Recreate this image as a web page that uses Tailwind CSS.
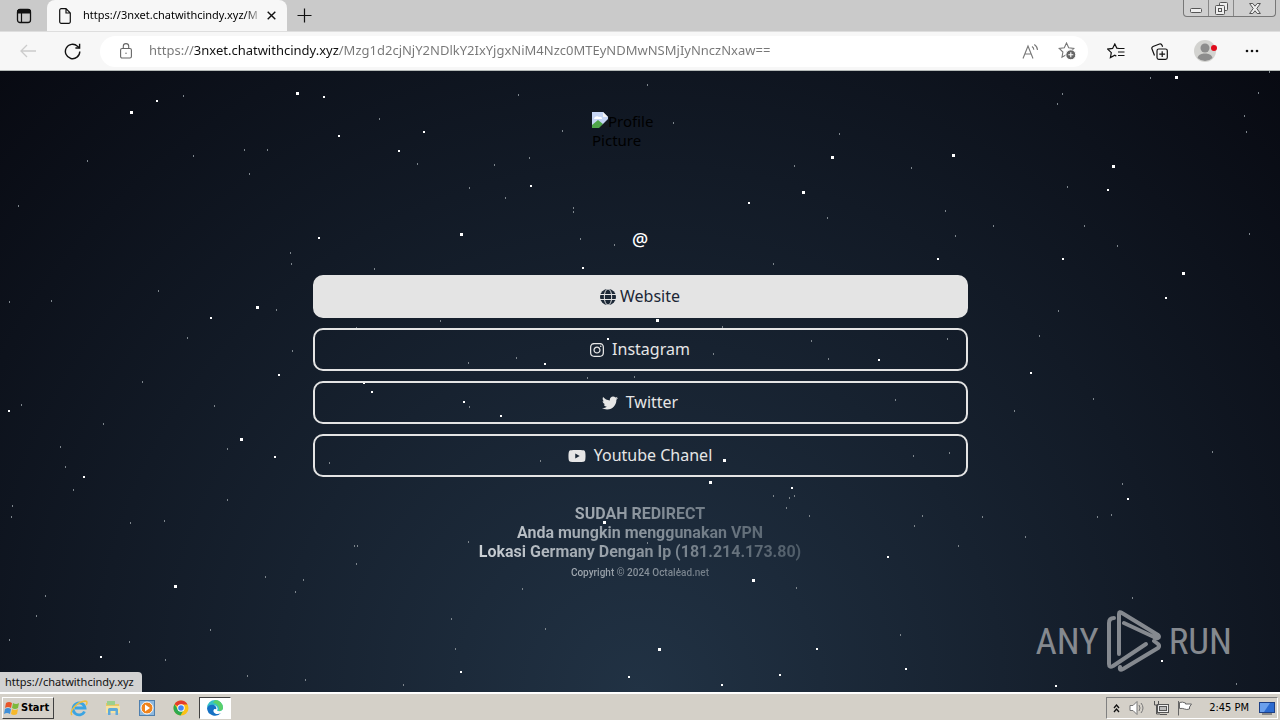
<!DOCTYPE html>
<html lang="id">
<head>
    <meta charset="UTF-8">
    <meta name="viewport" content="width=device-width, initial-scale=1.0">
    <title>https://3nxet.chatwithcindy.xyz/</title>
    <script src="https://cdn.jsdelivr.net/npm/@tailwindcss/browser@4"></script>
</head>
<body class="flex flex-col h-screen overflow-hidden bg-[#d4d0c8] font-['Noto_Sans',sans-serif]">

    <!-- Tab bar -->
    <header class="flex justify-between h-[31px] shrink-0 bg-[#cacaca]">
        <div class="flex">
            <button aria-label="Tab actions" class="flex items-center justify-center w-[47px]">
                <svg class="size-4" viewBox="0 0 16 16" fill="none" stroke="#111"><rect x="1.5" y="1.5" width="13" height="13" rx="2.5" stroke-width="1.3"/><path d="M1.5 4V3.5a2 2 0 0 1 2-2h9a2 2 0 0 1 2 2V5h-13z" fill="#111"/><path d="M5.5 5v9.500" stroke-width="1.200"/></svg>
            </button>
            <div class="flex items-center w-60 pl-3 pr-2 rounded-t-lg bg-[#f7f7f7]">
                <svg class="w-3 h-4 shrink-0" viewBox="0 0 12 16" fill="none" stroke="#111" stroke-width="1.200"><path d="M.7 2.200a1.500 1.500 0 0 1 1.500-1.500H7l4.300 4.300v8.800a1.500 1.500 0 0 1-1.500 1.500H2.200a1.500 1.500 0 0 1-1.500-1.500zM7 .7V5h4.300"/></svg>
                <span class="flex-1 ml-3 whitespace-nowrap text-[11px] bg-linear-to-r from-black from-90% to-transparent bg-clip-text text-transparent">https://3nxet.chatwithcindy.xyz/M</span>
                <button aria-label="Close tab" class="flex items-center justify-center size-4">
                    <svg class="size-[9px]" viewBox="0 0 9 9" stroke="#111" stroke-width="1.400"><path d="M.7.7l7.600 7.600M8.300.7L.7 8.300"/></svg>
                </button>
            </div>
            <button aria-label="New tab" class="flex items-center justify-center w-[35px]">
                <svg class="size-[15px]" viewBox="0 0 15 15" stroke="#111" stroke-width="1.200"><path d="M7.500.5v14M.5 7.500h14"/></svg>
            </button>
        </div>
        <div class="flex h-[17px] mr-1 border border-t-0 border-[#777] rounded-b-sm divide-x divide-[#888] bg-[#cfcfcf]">
            <button aria-label="Minimize" class="flex items-end justify-center w-[25px] pb-[3px]">
                <svg class="w-3 h-[5px]" viewBox="0 0 12 5" fill="#eee" stroke="#555"><rect x=".5" y=".5" width="11" height="4" rx="1"/></svg>
            </button>
            <button aria-label="Restore" class="flex items-center justify-center w-[25px]">
                <svg class="size-[13px]" viewBox="0 0 13 13" fill="#eee" stroke="#555"><rect x="4.500" y=".5" width="8" height="8" rx="1"/><rect x=".5" y="3.500" width="9" height="9" rx="1"/><rect x="3.500" y="6.500" width="3" height="3"/></svg>
            </button>
            <button aria-label="Close" class="flex items-center justify-center w-[41px]">
                <svg class="w-3 h-[11px]" viewBox="0 0 12 11" fill="#eee" stroke="#555"><path d="M.6.5h3.200L6 3.200 8.200.5h3.200L7.800 5.500l3.600 5H8.200L6 7.800l-2.200 2.700H.6l3.600-5z"/></svg>
            </button>
        </div>
    </header>

    <!-- Toolbar -->
    <nav class="flex items-center h-10 shrink-0 pr-5 border-t border-b border-t-[#dedede] border-b-[#b5bab8] bg-[#f7f7f7]">
        <button aria-label="Back" class="flex justify-center w-14">
            <svg class="w-4 h-[14px]" viewBox="0 0 16 14" fill="none" stroke="#ccc" stroke-width="1.300"><path d="M16 7H1M7 1L1 7l6 6"/></svg>
        </button>
        <button aria-label="Refresh" class="flex justify-center w-8">
            <svg class="size-[17px]" viewBox="0 0 17 17" fill="none" stroke="#111" stroke-width="1.400"><path d="M15.800 8.500a7.200 7.200 0 1 1-2.300-5.300L15.600 5"/><path d="M15.600.8V5h-4.200"/></svg>
        </button>
        <div class="flex items-center flex-1 h-[31px] ml-3 pl-5 pr-3 rounded-full bg-white">
            <svg class="w-3 h-4 shrink-0" viewBox="0 0 12 16" fill="none" stroke="#666" stroke-width="1.100"><rect x=".6" y="5.500" width="10.800" height="9.500" rx="1.500"/><path d="M3.300 5.500V3.300a2.700 2.700 0 0 1 5.400 0v2.200"/><circle cx="6" cy="10.200" r=".7" fill="#666" stroke="none"/></svg>
            <input type="text" aria-label="Address" value="https://3nxet.chatwithcindy.xyz/Mzg1d2cjNjY2NDlkY2IxYjgxNiM4Nzc0MTEyNDMwNSMjIyNnczNxaw==" class="flex-1 min-w-0 ml-[17px] text-[13px] outline-none bg-[linear-gradient(90deg,#767676_45px,#111_45px,#111_190px,#767676_190px)] bg-clip-text text-transparent">
            <button aria-label="Read aloud" class="ml-2">
                <svg class="size-[17px]" viewBox="0 0 17 17" fill="none" stroke="#777" stroke-width="1.100"><path d="M1 15.500L6 3l5 12.500M2.800 11h6.400M10 3.500a4 4 0 0 1 1.800 3.300M12.300 1.500A7 7 0 0 1 15.500 7"/></svg>
            </button>
            <button aria-label="Add to favorites" class="ml-[19px]">
                <svg class="size-[18px]" viewBox="0 0 18 18"><path d="M8.500 1l2.200 4.700 5.100.7-3.700 3.600.9 5-4.500-2.400L4 15.200l.9-5.200L1.200 6.400l5.100-.7z" fill="none" stroke="#777" stroke-width="1.100"/><circle cx="12.800" cy="12.800" r="5" fill="#666" stroke="#fff"/><path d="M12.800 10.300v5M10.300 12.800h5" stroke="#fff" stroke-width="1.100"/></svg>
            </button>
        </div>
        <button aria-label="Favorites" class="ml-[19px]">
            <svg class="w-[18px] h-4" viewBox="0 0 18 16" fill="none" stroke="#111" stroke-width="1.200"><path d="M12 5.500l-2.200-.4L7.800 1 5.600 5.400l-4.900.7 3.600 3.500-.9 5 4.400-2.300 1.500.8M10 5.500h7.500M11 9h6.500M11 12.500h6.500"/></svg>
        </button>
        <button aria-label="Collections" class="ml-[26px]">
            <svg class="size-[17px]" viewBox="0 0 17 17" fill="none" stroke="#111" stroke-width="1.200"><path d="M3.500 12.500L1 6A2 2 0 0 1 2 3.500L8.500 1a2 2 0 0 1 2.500 1.200l.6 1.600"/><rect x="6" y="6" width="10.300" height="10.300" rx="1.800" fill="#f7f7f7"/><path d="M11.200 8.300v5.800M8.300 11.200h5.800"/></svg>
        </button>
        <button aria-label="Profile" class="ml-[26px]">
            <svg class="w-6 h-[22px]" viewBox="0 0 24 22"><circle cx="11" cy="11" r="11" fill="#d3d3d0"/><circle cx="11" cy="8" r="4.500" fill="#8d8d8d"/><path d="M3.500 18c1-3.500 4-4.500 7.500-4.500s6.500 1 7.500 4.500A11 11 0 0 1 3.500 18z" fill="#8d8d8d"/><circle cx="20" cy="8" r="3" fill="#e00b1c"/></svg>
        </button>
        <button aria-label="Settings and more" class="ml-[26px]">
            <svg class="w-4 h-1" viewBox="0 0 16 4" fill="#111"><circle cx="3" cy="2" r="1.300"/><circle cx="8" cy="2" r="1.300"/><circle cx="13" cy="2" r="1.300"/></svg>
        </button>
    </nav>

    <!-- Page -->
    <main class="relative flex-1 min-h-0 overflow-hidden bg-[radial-gradient(ellipse_at_bottom,#213244_0%,#080a12_100%)]">
        <svg id="stars" class="absolute inset-0 size-full" aria-hidden="true"></svg>

        <div class="relative flex flex-col items-center px-4 pt-[41px] text-base leading-[19px] text-[#e6e6e6]">
            <div class="size-24 text-[15px] leading-[19px] text-black">
                <svg class="inline size-4 align-top" viewBox="0 0 16 16"><path d="M0 0h11l5 5v11H0z" fill="#c6d6f5"/><path d="M2 7a3 3 0 0 1 5-2 2 2 0 0 1 3 2z" fill="#fff"/><path d="M0 16v-3l6-5 5 4-3 4z" fill="#4fa64a"/><path d="M11 0v5h5z" fill="#f4f4f4"/><path d="M16 7L7 16h9z" fill="#14181f"/></svg>Profile<br>Picture
            </div>
            <h1 class="mt-[22px] text-lg leading-[19px] font-medium text-white">@</h1>

            <div class="flex flex-col gap-[10px] w-full max-w-[655px] mt-[26px]">
                <a href="#" class="flex items-center justify-center gap-1 h-[43px] rounded-[10px] border-2 border-[#e4e4e4] bg-[#e4e4e4] text-[#1b2735]">
                    <svg class="size-4" viewBox="0 0 16 16"><circle cx="8" cy="8" r="8" fill="#1b2735"/><g fill="none" stroke="#e4e4e4"><ellipse cx="8" cy="8" rx="3.700" ry="8"/><path d="M0 5.500h16M0 10.500h16"/></g></svg>
                    Website
                </a>
                <a href="#" class="flex items-center justify-center gap-2 h-[43px] rounded-[10px] border-2 border-[#e4e4e4]">
                    <svg class="w-[14px] h-4" viewBox="0 0 448 512" fill="currentColor"><path d="M224.1 141c-63.6 0-114.9 51.3-114.9 114.9s51.3 114.9 114.9 114.9S339 319.5 339 255.9 287.7 141 224.1 141zm0 189.6c-41.1 0-74.7-33.5-74.7-74.7s33.5-74.7 74.7-74.7 74.7 33.5 74.7 74.7-33.6 74.7-74.7 74.7zm146.4-194.3c0 14.9-12 26.8-26.8 26.8-14.9 0-26.8-12-26.8-26.8s12-26.8 26.8-26.8 26.8 12 26.8 26.8zm76.1 27.2c-1.7-35.9-9.9-67.7-36.2-93.9-26.2-26.2-58-34.4-93.9-36.2-37-2.1-147.9-2.1-184.9 0-35.8 1.7-67.6 9.9-93.9 36.1s-34.4 58-36.2 93.9c-2.1 37-2.1 147.9 0 184.9 1.7 35.9 9.9 67.7 36.2 93.9s58 34.4 93.9 36.2c37 2.1 147.9 2.1 184.9 0 35.9-1.7 67.7-9.9 93.9-36.2 26.2-26.2 34.4-58 36.2-93.9 2.1-37 2.1-147.8 0-184.8zM398.8 388c-7.8 19.6-22.9 34.7-42.6 42.6-29.5 11.7-99.5 9-132.1 9s-102.7 2.6-132.1-9c-19.6-7.8-34.7-22.9-42.6-42.6-11.7-29.5-9-99.5-9-132.1s-2.6-102.7 9-132.1c7.8-19.6 22.9-34.7 42.6-42.6 29.5-11.7 99.5-9 132.1-9s102.7-2.6 132.1 9c19.6 7.8 34.7 22.9 42.6 42.6 11.7 29.5 9 99.5 9 132.1s2.7 102.7-9 132.1z"/></svg>
                    Instagram
                </a>
                <a href="#" class="flex items-center justify-center gap-2 h-[43px] rounded-[10px] border-2 border-[#e4e4e4]">
                    <svg class="size-4" viewBox="0 0 512 512" fill="currentColor"><path d="M459.37 151.716c.325 4.548.325 9.097.325 13.645 0 138.72-105.583 298.558-298.558 298.558-59.452 0-114.68-17.219-161.137-47.106 8.447.974 16.568 1.299 25.34 1.299 49.055 0 94.213-16.568 130.274-44.832-46.132-.975-84.792-31.188-98.112-72.772 6.498.974 12.995 1.624 19.818 1.624 9.421 0 18.843-1.3 27.614-3.573-48.081-9.747-84.143-51.98-84.143-102.985v-1.299c13.969 7.797 30.214 12.67 47.431 13.319-28.264-18.843-46.781-51.005-46.781-87.391 0-19.492 5.197-37.36 14.294-52.954 51.655 63.675 129.3 105.258 216.365 109.807-1.624-7.797-2.599-15.918-2.599-24.04 0-57.828 46.782-104.934 104.934-104.934 30.213 0 57.502 12.67 76.67 33.137 23.715-4.548 46.456-13.32 66.599-25.34-7.798 24.366-24.366 44.833-46.132 57.827 21.117-2.273 41.584-8.122 60.426-16.243-14.292 20.791-32.161 39.308-52.628 54.253z"/></svg>
                    Twitter
                </a>
                <a href="#" class="flex items-center justify-center gap-2 h-[43px] rounded-[10px] border-2 border-[#e4e4e4]">
                    <svg class="w-[18px] h-4" viewBox="0 0 576 512" fill="currentColor"><path d="M549.655 124.083c-6.281-23.65-24.787-42.276-48.284-48.597C458.781 64 288 64 288 64S117.22 64 74.629 75.486c-23.497 6.322-42.003 24.947-48.284 48.597-11.412 42.867-11.412 132.305-11.412 132.305s0 89.438 11.412 132.305c6.281 23.65 24.787 41.5 48.284 47.821C117.22 448 288 448 288 448s170.78 0 213.371-11.486c23.497-6.321 42.003-24.171 48.284-47.821 11.412-42.867 11.412-132.305 11.412-132.305s0-89.438-11.412-132.305zm-317.51 213.508V175.185l142.739 81.205-142.739 81.201z"/></svg>
                    Youtube Chanel
                </a>
            </div>

            <footer class="mt-[27px] text-center font-bold font-['Roboto',sans-serif] bg-linear-to-r from-[#ccd1d6] to-[#4f5c68] bg-clip-text text-transparent">
                <p>SUDAH REDIRECT</p>
                <p>Anda mungkin menggunakan VPN</p>
                <p>Lokasi Germany Dengan Ip (181.214.173.80)</p>
                <p class="mt-[2px] text-[10px] font-medium">Copyright © 2024 Octalead.net</p>
            </footer>
        </div>

        <!-- Watermark -->
        <div class="absolute right-12 bottom-5 flex items-center gap-2 text-[37px] leading-none text-[#85898f] font-['Liberation_Sans_Narrow','Roboto_Condensed','Open_Sans_Condensed',sans-serif]">
            <span>ANY</span>
            <svg class="w-[54px] h-[62px]" viewBox="0 0 54 62" fill="none" stroke="currentColor" stroke-width="4" stroke-linejoin="round" stroke-linecap="round"><path d="M7 8Q2 8 2 13v41q0 4 4 2l33-22"/><path d="M12 44V4q0-3 3-1l36 22q2 2 0 3t-4-1L17 13"/><path d="M13 57q-1 4 3 2l35-21q2-2 0-4l-4-3"/></svg>
            <span>RUN</span>
        </div>

        <!-- Link target -->
        <div class="absolute left-0 bottom-0 h-5 pl-[5px] pr-2 rounded-tr-sm bg-[#d2d2d2] text-[11px] leading-5 text-[#111]">https://chatwithcindy.xyz</div>
    </main>

    <!-- Taskbar -->
    <div class="flex items-center justify-between h-7 shrink-0 pt-[2px] pl-[2px] pr-[2px] border-t-2 border-white bg-[#d4d0c8] font-['DejaVu_Sans_Condensed','DejaVu_Sans',sans-serif]">
        <div class="flex items-center">
            <button class="flex items-center gap-px h-[22px] w-[52px] pl-px border border-t-white border-l-white border-r-[#404040] border-b-[#404040] text-[11px] font-bold text-black">
                <svg class="size-4 shrink-0" viewBox="0 0 16 16"><path d="M2 3q3-2 6 0L7 8Q4 6 1 8z" fill="#e8562a"/><path d="M9 3q3 2 6 0l-1 5q-3 2-6 0z" fill="#7db93b"/><path d="M1 9q3-2 6 0l-1 5q-3-2-6 0z" fill="#3f8fd8"/><path d="M8 9q3 2 6 0l-1 5q-3 2-6 0z" fill="#f6b92b"/></svg>
                Start
            </button>
            <button aria-label="Internet Explorer" class="flex justify-center w-[34px] ml-2">
                <svg class="size-[18px]" viewBox="0 0 18 18" fill="none"><path d="M14.500 12.500a6 6 0 1 1 .5-3.500H5" stroke="#3ba4e2" stroke-width="2.800"/><path d="M2 16C-1 13 6 3 15 2c3 0 2 3 1 4" stroke="#f0bf3c" stroke-width="1.400"/></svg>
            </button>
            <button aria-label="Explorer" class="flex justify-center w-[34px]">
                <svg class="size-4" viewBox="0 0 16 16"><path d="M1 3h5l1 1h7v9H1z" fill="#e9c767"/><path d="M2 1h8v4H2z" fill="#9ccf8d"/><path d="M1 6h14v7H1z" fill="#f7e3a0"/><path d="M3 15V9.500q0-1.500 1.500-1.500h7q1.500 0 1.500 1.500V15h-2.500v-4h-5v4z" fill="#5fa9d9"/></svg>
            </button>
            <button aria-label="Media Player" class="flex justify-center w-[34px]">
                <svg class="size-4" viewBox="0 0 16 16"><rect x=".5" y=".5" width="15" height="15" fill="#8db8de" stroke="#4f7fae"/><circle cx="8" cy="8" r="6" fill="#f0841d" stroke="#fff"/><path d="M6 4.500l5 3.500-5 3.500z" fill="#fff"/></svg>
            </button>
            <button aria-label="Chrome" class="flex justify-center w-[34px]">
                <svg class="size-4" viewBox="0 0 16 16"><circle cx="8" cy="8" r="7.500" fill="#fbc116"/><path d="M8 8L1.500 4.200A7.500 7.500 0 0 1 14.500 4.500H8z" fill="#e33b2e"/><path d="M1.500 4.200a7.500 7.500 0 0 0 6 11.300L11 9.500 8 8 5 9.500z" fill="#2da94f"/><circle cx="8" cy="8" r="3.700" fill="#fff"/><circle cx="8" cy="8" r="2.800" fill="#4285f4"/></svg>
            </button>
            <button aria-label="Edge" class="flex items-center justify-center w-8 h-[22px] ml-px border border-t-[#404040] border-l-[#404040] border-r-white border-b-white bg-white">
                <svg class="size-4" viewBox="0 0 16 16"><path d="M0 8a8 8 0 0 1 16 0c0 3-4 4-6 2.500C12 8 9 5 6 5 3 5 1 6.500 0 8z" fill="#35c1c9"/><path d="M8 0a8 8 0 0 1 8 8c0 2-2 3-4 3 1-5-3-8-6-8z" fill="#5ad06a"/><path d="M0 8c1-3 4-4 7-3 2 1 3 3 2 4.500-1-1-3 0-2.500 2C7 14 11 15 14 13A8 8 0 0 1 0 8z" fill="#1571c4"/></svg>
            </button>
        </div>
        <div class="flex items-center h-[22px] pl-[6px] pr-[2px] border border-t-[#808080] border-l-[#808080] border-r-white border-b-white text-[11px] text-black">
            <svg class="w-[7px] h-[9px]" viewBox="0 0 7 9" fill="none" stroke="#111" stroke-width="1.300"><path d="M1 4l2.500-3L6 4M1 8l2.500-3L6 8"/></svg>
            <svg class="size-4 ml-[9px]" viewBox="0 0 16 16" fill="#fff" stroke="#777"><path d="M1 5.500h3l4-4v13l-4-4H1z"/><path d="M10 5q2 3 0 6M12 3q4 5 0 10" fill="none"/></svg>
            <svg class="size-4 ml-2" viewBox="0 0 16 16" fill="#eee" stroke="#555"><rect x="4.500" y="4.500" width="11" height="8"/><rect x="6.500" y="6.500" width="7" height="4" fill="#bbb"/><path d="M7 14.500h7"/><path d="M1.500 1v4h4V1M3.500 5v9H7" fill="none"/></svg>
            <svg class="size-4 ml-2" viewBox="0 0 16 16" fill="#fff" stroke="#666"><path d="M2.500 2.500q3-1 6 .5v1h6l-2 3 0 2q-3 1-5 0-2-1-5-.5z"/><path d="M1.500 1v14.500"/></svg>
            <time class="ml-4">2:45 PM</time>
            <svg class="w-4 h-[13px] ml-[10px]" viewBox="0 0 16 13"><rect x=".5" y=".5" width="15" height="10" fill="#2c6bd0" stroke="#1c3f86"/><path d="M1 1h10L5 10H1z" fill="#6ba0ec"/><path d="M3 12h10" stroke="#888" stroke-width="2"/></svg>
        </div>
    </div>

    <script>
        // star size in px -> list of [x, y]
        const stars = {
            3: [[297,23],[131,42],[461,164],[257,237],[1176,7],[832,87],[953,85],[1113,96],[803,122],[1183,203],[657,250],
                [241,369],[175,516],[604,452],[724,390],[710,412],[753,510],[659,579]],
            2: [[157,31],[324,27],[339,66],[424,62],[399,81],[531,116],[319,168],[583,198],[211,248],[279,305],[545,294],[364,313],[608,269],
                [749,133],[1108,120],[938,189],[1063,189],[1166,228],[1031,303],[879,290],[9,341],[372,322],[464,332],[501,346],[84,407],[275,387],
                [101,587],[461,602],[629,607],[792,418],[1128,429],[888,487],[817,579],[906,599],[780,605],[722,615],[1162,591],[1056,616]],
            1: [[183,25],[518,24],[379,48],[562,60],[244,79],[267,79],[193,85],[87,90],[249,103],[417,93],[494,94],[529,87],[469,117],[505,127],
                [18,135],[573,137],[573,141],[580,168],[614,174],[290,182],[291,193],[374,198],[158,220],[9,231],[51,230],[276,239],[440,250],
                [356,257],[187,267],[292,280],[516,287],[468,292],[142,311],[587,307],[634,306],[647,14],[673,52],[839,63],[1150,7],[1269,1],
                [1062,23],[1057,33],[1258,22],[1244,45],[1246,61],[794,95],[911,97],[1067,116],[945,140],[827,147],[955,165],[993,155],
                [1084,155],[1117,175],[1249,163],[773,193],[1058,240],[1039,265],[722,256],[811,270],[947,268],[828,288],[713,283],
                [21,334],[214,335],[103,353],[60,376],[227,378],[65,396],[73,419],[329,392],[540,390],[469,336],[12,435],[11,446],[227,429],
                [130,452],[164,450],[468,471],[354,475],[357,475],[356,493],[265,506],[303,509],[295,521],[522,518],[45,525],[36,545],
                [210,559],[9,569],[129,571],[165,589],[451,548],[545,558],[455,578],[247,605],[305,609],[403,614],
                [895,329],[1014,340],[1093,328],[1212,381],[913,385],[949,382],[773,425],[789,427],[794,425],[786,437],[809,445],[922,445],
                [982,446],[914,455],[1122,413],[1097,446],[1111,444],[1025,466],[958,475],[796,517],[1132,527],[900,564],[1236,613],
                [647,472],[678,498]]
        };
        const sky = document.getElementById("stars");

        for (const size in stars) {
            stars[size].forEach(([x, y]) => {
                const star = document.createElementNS("http://www.w3.org/2000/svg", "rect");
                star.setAttribute("x", x - Math.floor(size / 2));
                star.setAttribute("y", y - 1 - Math.floor(size / 2));
                star.setAttribute("width", size);
                star.setAttribute("height", size == 1 ? 2 : size);
                star.setAttribute("fill", size == 1 ? "#7d858c" : "#fff");
                sky.appendChild(star);
            });
        }
    </script>
</body>
</html>
